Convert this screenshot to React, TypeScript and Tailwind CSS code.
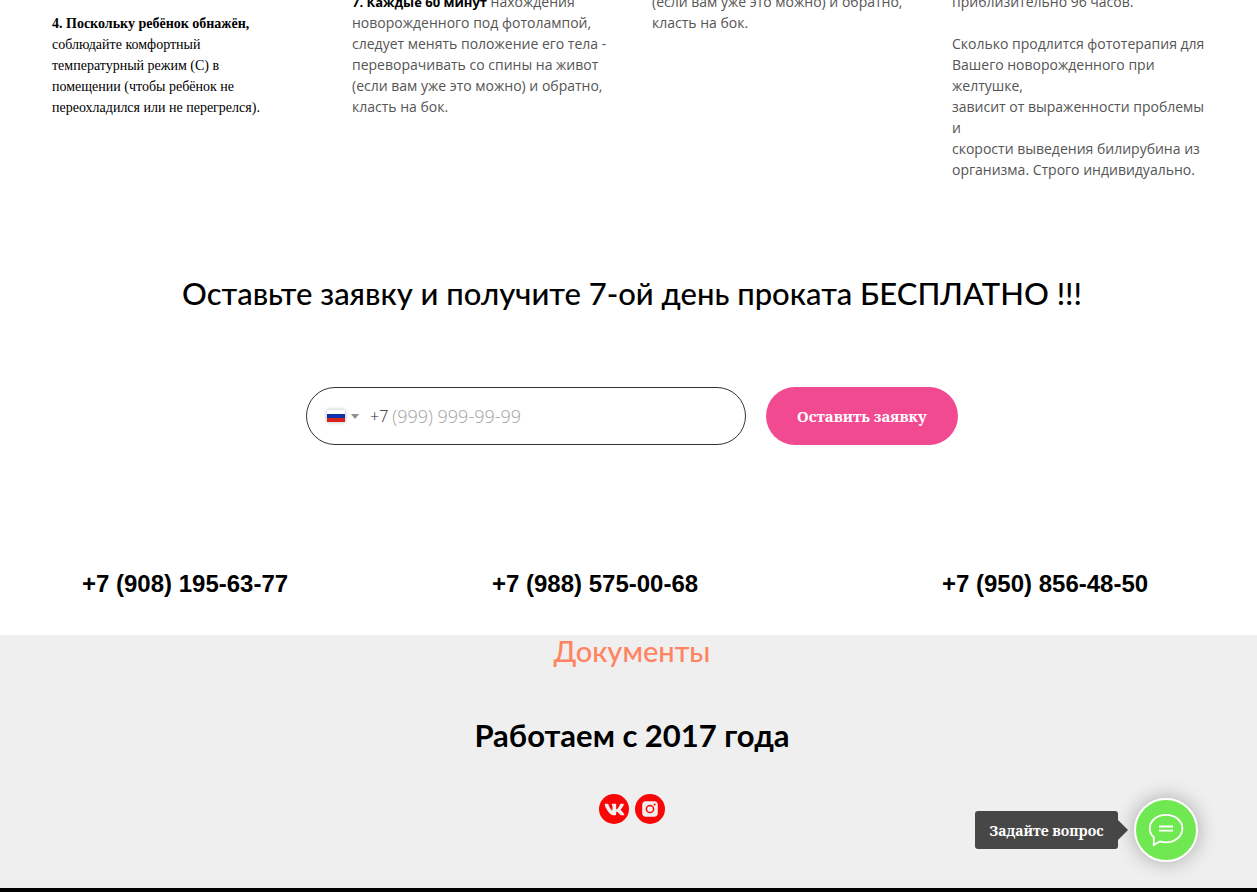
import { FaVk } from 'react-icons/fa'

const phones = ['+7 (908) 195-63-77', '+7 (988) 575-00-68', '+7 (950) 856-48-50']

function Flag() {
  return (
    <span className="flex h-3 w-[18px] flex-col shadow-[0_0_4px_rgba(0,0,0,0.3)]">
      <span className="flex-1 bg-white" />
      <span className="flex-1 bg-[#0b35a8]" />
      <span className="flex-1 bg-[#d8231c]" />
    </span>
  )
}

function InstagramIcon() {
  return (
    <svg viewBox="0 0 30 30" className="size-[30px]" aria-hidden="true">
      <circle cx="15" cy="15" r="15" fill="#f90707" />
      <rect x="7.2" y="7.2" width="15.6" height="15.6" rx="3.8" fill="#efefef" />
      <circle cx="15" cy="15" r="3.6" fill="none" stroke="#f90707" strokeWidth="1.5" />
      <circle cx="19.6" cy="10.4" r="1" fill="#f90707" />
    </svg>
  )
}

function Columns() {
  return (
    <section className="-mt-[9px] grid grid-cols-4 gap-10 px-5 text-[14px] leading-[21px] text-[#555]">
      <p className="pt-[22px] font-['Liberation_Serif',serif] font-normal text-black">
        <b>4. Поскольку ребёнок обнажён,</b><br />
        соблюдайте комфортный<br />
        температурный режим (С) в<br />
        помещении (чтобы ребёнок не<br />
        переохладился или не перегрелся).
      </p>
      <p className="whitespace-nowrap">
        <b className="text-[13px] leading-none font-bold text-black">7. Каждые 60 минут</b> нахождения<br />
        новорожденного под фотолампой,<br />
        следует менять положение его тела -<br />
        переворачивать со спины на живот<br />
        (если вам уже это можно) и обратно,<br />
        класть на бок.
      </p>
      <p className="whitespace-nowrap">
        (если вам уже это можно) и обратно,<br />
        класть на бок.
      </p>
      <p className="whitespace-nowrap">
        приблизительно 96 часов.<br /><br />
        Сколько продлится фототерапия для<br />
        Вашего новорожденного при<br />
        желтушке,<br />
        зависит от выраженности проблемы<br />
        и<br />
        скорости выведения билирубина из<br />
        организма. Строго индивидуально.
      </p>
    </section>
  )
}

function RequestForm() {
  return (
    <form className="mt-[69px] flex justify-center gap-5" onSubmit={(e) => e.preventDefault()}>
      <div className="flex h-[58px] w-[440px] items-center rounded-full border border-[#333] pr-5 pl-5">
        <button type="button" aria-label="Россия" className="flex items-center gap-[6px]">
          <Flag />
          <svg viewBox="0 0 8 5" className="h-[5px] w-2" aria-hidden="true"><path d="M0 0h8L4 5z" fill="#8f8f8f" /></svg>
        </button>
        <label htmlFor="phone" className="ml-[11px] text-[16px] font-light text-[#222]">+7</label>
        <input
          id="phone"
          type="tel"
          placeholder="(999) 999-99-99"
          className="ml-1 min-w-0 flex-1 text-[18px] font-light outline-none placeholder:text-[#a3a3a3]"
        />
      </div>
      <button type="submit" className="h-[58px] w-48 rounded-full bg-[#f24a91] font-['Noto_Serif','Liberation_Serif',serif] text-[15px] font-bold text-white">
        Оставить заявку
      </button>
    </form>
  )
}

function ChatWidget() {
  return (
    <div className="fixed right-[59px] bottom-[30px] flex items-center">
      <div className="flex h-[38px] w-[143px] items-center justify-center rounded-[3px] bg-[#474747] font-['Noto_Serif','Liberation_Serif',serif] text-[14px] font-bold text-white">
        Задайте вопрос
      </div>
      <svg viewBox="0 0 10 20" className="h-5 w-[10px]" aria-hidden="true"><path d="M0 0l10 10L0 20z" fill="#474747" /></svg>
      <button type="button" aria-label="Задайте вопрос" className="ml-[6px] flex size-16 items-center justify-center rounded-full border-2 border-white bg-[#70e852] shadow-[0_0_20px_rgba(0,0,0,0.3)]">
        <svg viewBox="0 0 36 34" className="h-[34px] w-9" fill="none" stroke="#fff" strokeWidth="1.8" aria-hidden="true">
          <path d="M5.8 24.3C2.8 21.7 1.8 18.8 1.8 15.4 1.8 7.8 8.9 1.8 18 1.8s16.4 6 16.4 13.6S27.1 29.4 18 29.4c-2.2 0-4.2-.3-6.1-1L5.8 32z" />
          <path d="M11 13.5h14M11 17.7h14" />
        </svg>
      </button>
    </div>
  )
}

export default function App() {
  return (
    <div className="overflow-hidden bg-white font-['Open_Sans',sans-serif] text-black">
      <div className="pl-[7px]">
        <main className="mx-auto max-w-[1200px]">
          <Columns />
          <h2 className="mt-[88px] text-center font-['Lato',sans-serif] text-[31px] leading-[50px] font-medium whitespace-nowrap">
            Оставьте заявку и получите 7-ой день проката БЕСПЛАТНО !!!
          </h2>
          <RequestForm />
          <div className="mt-[119px] grid grid-cols-[41fr_45fr_29fr] pb-[31px] pl-[50px] font-['Liberation_Sans',sans-serif] text-[24px] leading-10 font-bold whitespace-nowrap">
            {phones.map((p) => <a key={p} href={`tel:${p.replace(/[^+\d]/g, '')}`}>{p}</a>)}
          </div>
        </main>
      </div>
      <footer className="border-b-4 border-black bg-[#efefef] pb-16 pl-[7px] text-center font-['Lato',sans-serif]">
        <a href="#docs" className="block text-[29px] leading-8 font-medium text-[#ff8562]">Документы</a>
        <h2 className="mt-[46px] text-[31px] leading-[44px] font-bold">Работаем с 2017 года</h2>
        <div className="mt-[37px] flex justify-center gap-[6px]">
          <a href="#vk" aria-label="VK" className="flex size-[30px] items-center justify-center rounded-full bg-[#f90707] text-[#efefef]">
            <FaVk size={21} />
          </a>
          <a href="#instagram" aria-label="Instagram"><InstagramIcon /></a>
        </div>
      </footer>
      <ChatWidget />
    </div>
  )
}
